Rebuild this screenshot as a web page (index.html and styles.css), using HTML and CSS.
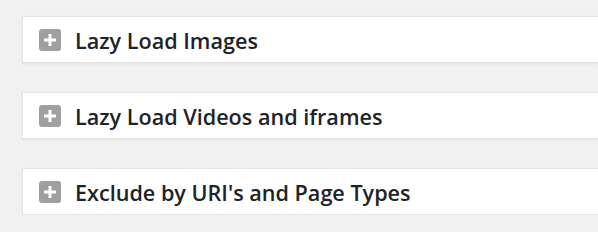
FILE: index.html
```html
<!DOCTYPE html>
<html>
<head>
    <title>Lazy Load Settings</title>
    <link rel="stylesheet" href="styles.css">
</head>
<body>
    <div class="panels">
        <div class="postbox">
            <span class="toggle"></span>
            <h2>Lazy Load Images</h2>
        </div>
        <div class="postbox">
            <span class="toggle"></span>
            <h2>Lazy Load Videos and iframes</h2>
        </div>
        <div class="postbox">
            <span class="toggle"></span>
            <h2>Exclude by URI's and Page Types</h2>
        </div>
    </div>
</body>
</html>
```

FILE: styles.css
```css
body {
    margin: 0;
    background: #f1f1f1;
    font-family: "Open Sans", "Noto Sans", sans-serif;
    color: #1e2327;
}

.panels {
    display: flex;
    flex-direction: column;
    gap: 29px;
    padding: 16px 0 0 22px;
}

.postbox {
    display: flex;
    align-items: center;
    height: 45px;
    padding-left: 16px;
    background: #fff;
    border: 1px solid #e5e5e5;
    border-right: 0;
    box-shadow: 0 1px 2px rgba(0, 0, 0, 0.06);
}

.toggle {
    position: relative;
    width: 22px;
    height: 22px;
    border-radius: 3px;
    background: #a0a0a0;
    flex-shrink: 0;
}

.toggle::before,
.toggle::after {
    content: "";
    position: absolute;
    background: #fff;
    left: 50%;
    top: 50%;
    transform: translate(-50%, -50%);
}

.toggle::before {
    width: 12px;
    height: 3px;
}

.toggle::after {
    width: 3px;
    height: 12px;
}

h2 {
    margin: 2px 0 0 14px;
    font-size: 21.6px;
    font-weight: 600;
    line-height: 1;
}
```
